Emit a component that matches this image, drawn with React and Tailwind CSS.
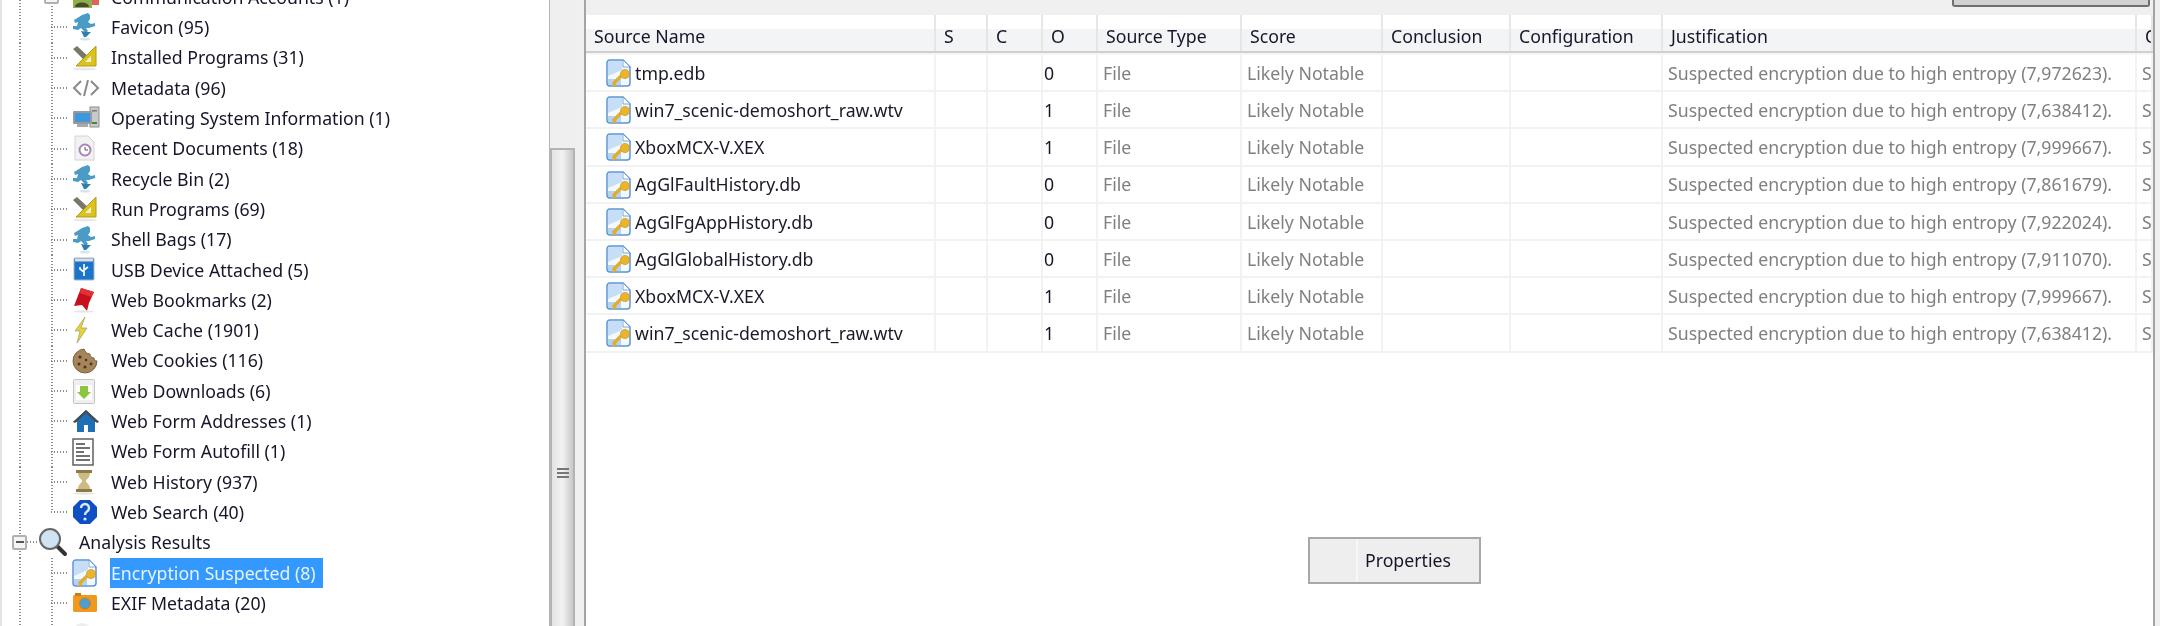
import React from 'react';

// --- icons, drawn on small boxes ---
const Runner = () => (
  <svg width="24" height="28" viewBox="0 0 24 28">
    <path d="M10 2l6-2 2 2 0 4-2 3 3 2 4-1 0 3-6 2-3 0 2 3-3 3-1-3-3-3-3 2-5-1 0-3 4 0 1-4-3 1-1-3 5-3z" fill="#4a9cc7" />
    <path d="M9 18l6 1 4 0-5 5-2 0z" fill="#2f7fa8" />
    <ellipse cx="13" cy="26" rx="5" ry="1.6" fill="#d3e6f0" />
  </svg>
);

const SetSquare = () => (
  <svg width="26" height="26" viewBox="0 0 26 26">
    <path d="M1 4l4-3 14 13-3 5z" fill="#77776a" />
    <path d="M24 1v20H4z" fill="#dcc21f" stroke="#b39c14" />
    <path d="M19 11v6h-6z" fill="#f7f3d0" />
    <ellipse cx="13" cy="24" rx="12" ry="1.5" fill="#e8e8e8" />
  </svg>
);

const Code = () => (
  <svg width="28" height="22" viewBox="0 0 28 22" fill="none" stroke="#8a8a8a" strokeWidth="2">
    <path d="M9 4L2 11l7 7M19 4l7 7-7 7M16 3l-4 16" />
  </svg>
);

const Computer = () => (
  <svg width="28" height="24" viewBox="0 0 28 24">
    <rect x="18" y="1" width="9" height="20" fill="#c9c9c9" stroke="#8f8f8f" />
    <rect x="20" y="4" width="5" height="1.5" fill="#777" />
    <rect x="20" y="16" width="5" height="2" fill="#3e8e3e" />
    <rect x="1" y="5" width="19" height="13" rx="1" fill="#9a9a9a" />
    <rect x="3" y="7" width="15" height="9" fill="#3f97dc" />
    <rect x="5" y="18" width="11" height="3" fill="#aaa" />
  </svg>
);

const RecentDoc = () => (
  <svg width="24" height="27" viewBox="0 0 24 27">
    <path d="M3 1h13l6 6v18H3z" fill="#f2f2f2" stroke="#d4d4d4" />
    <circle cx="13" cy="15" r="5.5" fill="#fff" stroke="#a884b8" strokeWidth="2" />
    <path d="M13 12v3h3" stroke="#555" fill="none" />
  </svg>
);

const Usb = () => (
  <svg width="24" height="26" viewBox="0 0 24 26">
    <rect x="2" y="1" width="20" height="22" rx="1" fill="#1a74c9" stroke="#aab4bd" />
    <rect x="3" y="1.5" width="18" height="3" fill="#d9dee2" />
    <path d="M12 7v12M12 15l-4-3V10M12 13l4-3" stroke="#fff" strokeWidth="1.6" fill="none" />
  </svg>
);

const Bookmark = () => (
  <svg width="24" height="26" viewBox="0 0 24 26">
    <path d="M9 1l13 4-5 11-2 8-5-6-8 1z" fill="#c8101c" />
    <path d="M9 1l13 4-3 5L8 6z" fill="#e0313a" />
    <ellipse cx="12" cy="24.5" rx="10" ry="1.2" fill="#e6e6e6" />
  </svg>
);

const Bolt = () => (
  <svg width="18" height="28" viewBox="0 0 18 28">
    <path d="M13 1L3 15h5L5 27l10-15H9z" fill="#e9d32c" stroke="#9b9b78" strokeWidth="0.7" />
  </svg>
);

const Cookie = () => (
  <svg width="26" height="26" viewBox="0 0 26 26">
    <path d="M12 1a12 12 0 1 0 13 12c-2 0-3-1-3-3-3 0-4-2-4-4-3 0-5-2-6-5z" fill="#a6855a" stroke="#7c6240" />
    <g fill="#4c3620">
      <circle cx="8" cy="9" r="1.6" /><circle cx="14" cy="12" r="1.3" /><circle cx="7" cy="16" r="1.5" />
      <circle cx="13" cy="19" r="1.6" /><circle cx="19" cy="16" r="1.4" />
    </g>
  </svg>
);

const Downloads = () => (
  <svg width="24" height="27" viewBox="0 0 24 27">
    <rect x="1.5" y="1.5" width="21" height="24" rx="1" fill="#efefef" stroke="#c4c4c4" />
    <rect x="4" y="7" width="16" height="15" fill="#fff" />
    <path d="M8 8h8v6h3l-7 7-7-7h3z" fill="#8cc63f" />
  </svg>
);

const House = () => (
  <svg width="28" height="24" viewBox="0 0 28 24">
    <path d="M14 1L1 13h4v10h7v-7h4v7h7V13h4z" fill="#1f6fb5" />
    <path d="M14 1L1 13l2 1L14 4l11 10 2-1z" fill="#4a4a4a" />
  </svg>
);

const Form = () => (
  <svg width="22" height="28" viewBox="0 0 22 28">
    <rect x="1" y="1" width="20" height="26" fill="#fff" stroke="#555" strokeWidth="1.4" />
    <path d="M4 6h9M4 10h14M4 14h8M4 18h14M4 22h14" stroke="#444" strokeWidth="1.6" />
  </svg>
);

const Hourglass = () => (
  <svg width="24" height="26" viewBox="0 0 24 26">
    <rect x="4" y="1" width="16" height="3" fill="#8c7a48" />
    <rect x="4" y="20" width="16" height="3" fill="#8c7a48" />
    <path d="M6 4h12c0 5-4 6-4 8s4 3 4 8H6c0-5 4-6 4-8S6 9 6 4z" fill="#cdbb85" />
    <ellipse cx="12" cy="24.5" rx="11" ry="1.2" fill="#e4e4e4" />
  </svg>
);

const Help = () => (
  <svg width="26" height="26" viewBox="0 0 26 26">
    <path d="M8 1h10l7 7v10l-7 7H8l-7-7V8z" fill="#0f4fc4" />
    <path d="M9 9a4 4 0 1 1 6 3.5c-1.5 1-2 1.5-2 3.5" fill="none" stroke="#dfe9fb" strokeWidth="2.4" />
    <circle cx="13" cy="20" r="1.6" fill="#dfe9fb" />
  </svg>
);

const Magnifier = () => (
  <svg width="30" height="30" viewBox="0 0 30 30">
    <path d="M18 18l9 9" stroke="#333" strokeWidth="4" strokeLinecap="round" />
    <circle cx="12" cy="12" r="10" fill="#cfe3f2" stroke="#666" strokeWidth="2" />
  </svg>
);

const EncryptedDoc = () => (
  <svg width="25" height="28" viewBox="0 0 25 28">
    <path d="M4 1h13l7 7v16a3 3 0 0 1-3 3H4a3 3 0 0 1-3-3V4a3 3 0 0 1 3-3z" fill="#f4f9fe" stroke="#5b94d3" strokeWidth="1.5" />
    <path d="M2 2h14v9l-14 6z" fill="#c6def6" />
    <path d="M17 1v7h7z" fill="#ffffff" stroke="#5b94d3" strokeWidth="0.8" />
    <path d="M2 20h13v6H2z" fill="#b4d3f2" />
    <path d="M9 27l-1-3 7-7" stroke="#e3ad2c" strokeWidth="3.4" fill="none" />
    <circle cx="19" cy="15" r="4.6" fill="#eab52e" stroke="#c58f16" strokeWidth="0.6" />
  </svg>
);

const Camera = () => (
  <svg width="26" height="24" viewBox="0 0 26 24">
    <rect x="1" y="4" width="24" height="17" rx="1.5" fill="#f0991e" />
    <rect x="3" y="2" width="6" height="3" fill="#c4801c" />
    <circle cx="13" cy="12.5" r="5.5" fill="#4f9ed0" stroke="#d07f14" />
  </svg>
);

const CommAccounts = () => (
  <svg width="28" height="28" viewBox="0 0 28 28">
    <rect x="1" y="1" width="19" height="24" fill="#8cb34a" />
    <circle cx="10" cy="11" r="4" fill="#4a4a2e" />
    <path d="M3 24c0-6 14-6 14 0z" fill="#4a4a2e" />
    <rect x="20" y="10" width="7" height="12" fill="#e0605a" />
  </svg>
);

const treeRows = [
  { label: 'Communication Accounts (1)', icon: <CommAccounts />, box: true },
  { label: 'Favicon (95)', icon: <Runner /> },
  { label: 'Installed Programs (31)', icon: <SetSquare /> },
  { label: 'Metadata (96)', icon: <Code /> },
  { label: 'Operating System Information (1)', icon: <Computer /> },
  { label: 'Recent Documents (18)', icon: <RecentDoc /> },
  { label: 'Recycle Bin (2)', icon: <Runner /> },
  { label: 'Run Programs (69)', icon: <SetSquare /> },
  { label: 'Shell Bags (17)', icon: <Runner /> },
  { label: 'USB Device Attached (5)', icon: <Usb /> },
  { label: 'Web Bookmarks (2)', icon: <Bookmark /> },
  { label: 'Web Cache (1901)', icon: <Bolt /> },
  { label: 'Web Cookies (116)', icon: <Cookie /> },
  { label: 'Web Downloads (6)', icon: <Downloads /> },
  { label: 'Web Form Addresses (1)', icon: <House /> },
  { label: 'Web Form Autofill (1)', icon: <Form /> },
  { label: 'Web History (937)', icon: <Hourglass /> },
  { label: 'Web Search (40)', icon: <Help />, last: true },
];

const subRows = [
  { label: 'Encryption Suspected (8)', icon: <EncryptedDoc />, selected: true },
  { label: 'EXIF Metadata (20)', icon: <Camera /> },
  { label: '', icon: <div className="w-[20px] h-[20px] rounded-full bg-[#eeeeee]" /> },
];

const DotsV = ({ className = 'h-full' }) => (
  <div className={`w-[2px] bg-[linear-gradient(#8c8c8c_50%,transparent_50%)] bg-[length:2px_3px] ${className}`} />
);

const DotsH = ({ className = '' }) => (
  <div className={`h-[2px] bg-[linear-gradient(90deg,#8c8c8c_50%,transparent_50%)] bg-[length:3px_2px] ${className}`} />
);

const TreeBox = ({ open }) => (
  <div className="w-[15px] h-[15px] border-2 border-[#b0b0b0] rounded-[2px] bg-[#f4f4f4] flex items-center justify-center shrink-0">
    <div className={open ? 'w-[8px] h-[2px] bg-[#555]' : 'w-[2px] h-[2px] bg-[#555]'} />
  </div>
);

const TreeRow = ({ row }) => (
  <div className="flex h-[30.3px]">
    <div className="w-[19px] shrink-0" />
    <div className="w-[32px] shrink-0"><DotsV /></div>
    <div className="relative w-[21px] shrink-0 flex items-center">
      <div className="absolute left-0 top-0 h-full">
        <DotsV className={row.last ? 'h-1/2' : 'h-full'} />
      </div>
      <DotsH className="w-[17px]" />
      {row.box && <div className="absolute -left-[7px] top-[7px]"><TreeBox /></div>}
    </div>
    <div className="w-[38px] shrink-0 flex items-center justify-start">{row.icon}</div>
    <div className={`flex items-center h-full pl-px pr-[7px] ${row.selected ? 'bg-[#3399ff] text-[#e8f3ff]' : ''}`}>{row.label}</div>
  </div>
);

const Tree = () => (
  <div className="w-[549px] shrink-0 h-full overflow-hidden bg-white border-l-2 border-[#e4e4e4]">
    <div className="-mt-[18px] -ml-[2px]">
      {treeRows.map((row) => <TreeRow key={row.label} row={row} />)}
      {/* Analysis Results, one level up */}
      <div className="relative flex h-[30.3px] items-center">
        <div className="absolute left-[19px] top-0 h-full"><DotsV /></div>
        <div className="w-[12px] shrink-0" />
        <div className="relative"><TreeBox open /></div>
        <DotsH className="w-[11px] shrink-0" />
        <div className="w-[41px] shrink-0"><Magnifier /></div>
        <div>Analysis Results</div>
      </div>
      {subRows.map((row) => <TreeRow key={row.label} row={row} />)}
    </div>
  </div>
);

const Scrollbar = () => (
  <div className="w-[35px] shrink-0 h-full flex bg-[#f0f0f0]">
    <div className="w-[26px] border-l border-[#b5b5b5] bg-[#efefef] flex flex-col">
      <div className="h-[148px] shrink-0" />
      <div className="flex-1 border-x-2 border-t-2 border-[#b4b4b4] bg-gradient-to-r from-[#e4e4e4] via-[#f2f2f2] to-[#c8c8c8] flex flex-col items-center pt-[318px] gap-[2px]">
        <div className="w-[12px] h-[2px] bg-[#777]" />
        <div className="w-[12px] h-[2px] bg-[#777]" />
        <div className="w-[12px] h-[2px] bg-[#777]" />
      </div>
    </div>
    <div className="w-[9px]" />
  </div>
);

const columns = [
  { name: 'Source Name', w: 'w-[350px]' },
  { name: 'S', w: 'w-[52px]' },
  { name: 'C', w: 'w-[55px]' },
  { name: 'O', w: 'w-[55px]' },
  { name: 'Source Type', w: 'w-[144px]' },
  { name: 'Score', w: 'w-[141px]' },
  { name: 'Conclusion', w: 'w-[128px]' },
  { name: 'Configuration', w: 'w-[152px]' },
  { name: 'Justification', w: 'w-[474px]' },
  { name: 'O', w: 'w-[16px]' },
];

const rows = [
  ['tmp.edb', '0', '7,972623'],
  ['win7_scenic-demoshort_raw.wtv', '1', '7,638412'],
  ['XboxMCX-V.XEX', '1', '7,999667'],
  ['AgGlFaultHistory.db', '0', '7,861679'],
  ['AgGlFgAppHistory.db', '0', '7,922024'],
  ['AgGlGlobalHistory.db', '0', '7,911070'],
  ['XboxMCX-V.XEX', '1', '7,999667'],
  ['win7_scenic-demoshort_raw.wtv', '1', '7,638412'],
];

const Cell = ({ w, className = '', children }) => (
  <div className={`${w} shrink-0 h-full flex items-center overflow-hidden whitespace-nowrap border-r-2 border-[#f2f2f2] pt-px ${className}`}>{children}</div>
);

const ResultRow = ({ row }) => (
  <div className="flex h-[37.2px] border-b-2 border-[#f2f2f2]">
    <Cell w={columns[0].w} className="pl-[20px] gap-[4px]">
      <EncryptedDoc />
      <span className="text-[#1a1a2a]">{row[0]}</span>
    </Cell>
    <Cell w={columns[1].w} />
    <Cell w={columns[2].w} />
    <Cell w={columns[3].w} className="pl-[1px]">{row[1]}</Cell>
    <Cell w={columns[4].w} className="pl-[5px] text-[#808080]">File</Cell>
    <Cell w={columns[5].w} className="pl-[5px] text-[#808080]">Likely Notable</Cell>
    <Cell w={columns[6].w} />
    <Cell w={columns[7].w} />
    <Cell w={columns[8].w} className="pl-[5px] text-[#808080]">{`Suspected encryption due to high entropy (${row[2]}).`}</Cell>
    <Cell w={columns[9].w} className="pl-[5px] text-[#808080]">S</Cell>
  </div>
);

const ResultsPanel = () => (
  <div className="w-[1571px] shrink-0 h-full border-x-2 border-[#a4a4a4] bg-white flex flex-col">
    <div className="h-[15px] bg-[#f0f0f0] flex justify-end shrink-0">
      <div className="w-[198px] h-[7px] mr-[3px] bg-[#d2d2d2] border-2 border-t-0 border-[#6f6f6f] rounded-b-[3px]" />
    </div>
    <div className="flex h-[38px] shrink-0 border-b-2 border-[#cfcfcf] bg-gradient-to-b from-white from-40% to-[#f3f4f6] to-40%">
      {columns.map((col, i) => (
        <div key={col.name + i} className={`${col.w} shrink-0 flex items-center pl-[8px] pt-[6px] overflow-hidden whitespace-nowrap border-r-2 border-[#e6e6e6]`}>{col.name}</div>
      ))}
    </div>
    <div className="h-[2px] shrink-0 bg-[#f6f6f6]" />
    {rows.map((row, i) => <ResultRow key={i} row={row} />)}
    <div className="mt-[184px] ml-[722px]">
      <div className="w-[173px] h-[47px] border-2 border-[#a8a8a8] bg-[#eeeeee] flex items-center">
        <div className="w-[48px] h-full border-r-2 border-[#f7f7f7]" />
        <span className="pl-[7px]">Properties</span>
      </div>
    </div>
  </div>
);

export default function App() {
  return (
    <div className="w-[2160px] h-[626px] overflow-hidden flex bg-[#f0f0f0] text-[17.7px] text-[#16162a] [font-family:'Noto_Sans','Open_Sans',sans-serif] blur-[0.5px]">
      <Tree />
      <Scrollbar />
      <ResultsPanel />
    </div>
  );
}
